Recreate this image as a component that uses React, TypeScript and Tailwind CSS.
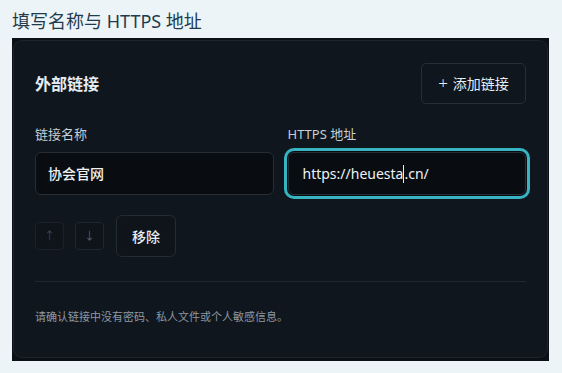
import React from "react";

const cjk = '"Noto Sans", "Noto Sans CJK SC", sans-serif';

export default function App() {
  return (
    <div
      className="w-[562px] h-[373px] bg-[#edf4f7] overflow-hidden"
      style={{ fontFamily: cjk }}
    >
      <div className="pl-[12px] pt-[9px] h-[38px] text-[18px] leading-[24px] text-[#1f3b4c]">
        填写名称与 HTTPS 地址
      </div>
      <div className="ml-[12px] w-[537px] h-[323px] bg-[#0a1016] px-[1px] pt-[2px] pb-[3px] flex">
        <div className="flex-1 rounded-[9px] border border-[#1b232b] bg-[#0f161d] px-[21px] pt-[22px]">
          <div className="flex items-center justify-between h-[41px]">
            <div className="text-[16px] font-bold text-[#e6edf3] leading-[22px]">外部链接</div>
            <button className="h-[41px] w-[105px] rounded-[5px] border border-[#262e36] bg-[#0f161d] text-[14px] text-[#e6edf3] flex items-center justify-center gap-[5px]">
              <span className="text-[17px] font-light leading-none -mt-[2px]">+</span>
              <span>添加链接</span>
            </button>
          </div>
          <div className="grid grid-cols-2 gap-x-[14px] mt-[21px]">
            <div>
              <div className="text-[13px] leading-[19px] text-[#c6ced6]">链接名称</div>
              <div className="mt-[8px] h-[43px] rounded-[6px] border border-[#262d35] bg-[#090d12] flex items-center pl-[12px] text-[14px] text-[#eef2f5] font-medium">
                协会官网
              </div>
            </div>
            <div>
              <div className="text-[13px] leading-[19px] text-[#c6ced6]">HTTPS 地址</div>
              <div className="mt-[8px] h-[43px] rounded-[6px] border border-[#262d35] bg-[#090d12] flex items-center pl-[14px] text-[14px] text-[#eef2f5] ring-[3px] ring-[#36b4c2] ring-offset-1 ring-offset-[#090d12]">
                <span>https://heuesta</span>
                <span className="inline-block w-[1px] h-[18px] bg-[#e6edf3]"></span>
                <span>.cn/</span>
              </div>
            </div>
          </div>
          <div className="flex items-center mt-[20px] h-[42px]">
            <button className="w-[29px] h-[28px] rounded-[4px] border border-[#1a2128] bg-[#0e141a] text-[11px] text-[#3c464f] flex items-center justify-center">
              ↑
            </button>
            <button className="ml-[11px] w-[29px] h-[28px] rounded-[4px] border border-[#1f272f] bg-[#0e141a] text-[11px] text-[#56616b] flex items-center justify-center">
              ↓
            </button>
            <button className="ml-[12px] w-[60px] h-[42px] rounded-[6px] border border-[#232b33] bg-[#0e141a] text-[14px] font-medium text-[#e6edf3] flex items-center justify-center">
              移除
            </button>
          </div>
          <div className="mt-[24px] h-[1px] bg-[#1f272f]"></div>
          <div className="mt-[26px] text-[11px] leading-[18px] text-[#8e98a2]">
            请确认链接中没有密码、私人文件或个人敏感信息。
          </div>
        </div>
      </div>
    </div>
  );
}
